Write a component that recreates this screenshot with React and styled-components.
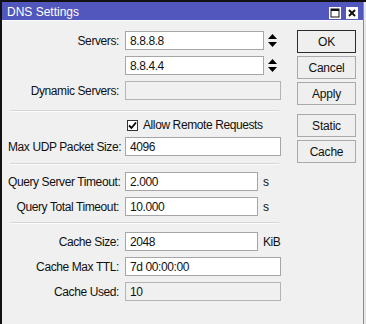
import React from 'react'
import styled, { createGlobalStyle } from 'styled-components'

const Global = createGlobalStyle`
  html, body { margin: 0; padding: 0; background: #e6e6e6; }
  * { box-sizing: border-box; }
`

const Frame = styled.div`
  width: 366px;
  height: 324px;
  display: flex;
  border-left: 2px solid #111;
  border-top: 2px solid #111;
  background: #e6e6e6;
  padding-right: 2px;
  font-family: "Liberation Sans", Arial, sans-serif;
  font-size: 12px;
  letter-spacing: -0.4px;
  color: #111;
`

const Window = styled.div`
  flex: 1;
  display: flex;
  flex-direction: column;
  background: #f0f0f0;
  border-right: 1px solid #8c8c8c;
`

const TitleBar = styled.div`
  height: 19px;
  display: flex;
  align-items: center;
  justify-content: space-between;
  padding: 0 5px 0 5px;
  background: #5157bd;
  color: #fff;
  letter-spacing: 0;
  border-bottom: 1px solid #fafafa;
`

const TitleText = styled.span`
  font-size: 12px;
  margin-top: 1px;
`

const TitleButtons = styled.div`
  display: flex;
  gap: 5px;
  margin-top: 3px;
`

const TitleButton = styled.div`
  width: 12px;
  height: 12px;
  background: #fff;
  display: flex;
  align-items: center;
  justify-content: center;
`

const Body = styled.div`
  display: flex;
  padding: 9px 0 0 6px;
`

const Form = styled.div`
  width: 273px;
  display: flex;
  flex-direction: column;
  margin-top: 1px;
`

const Row = styled.div`
  display: grid;
  grid-template-columns: 111px 156px;
  column-gap: 6px;
  align-items: center;
  height: ${p => p.$h || 19}px;
  margin-top: ${p => p.$top ?? 6}px;
`

const Label = styled.label`
  text-align: right;
  white-space: nowrap;
`

const Field = styled.div`
  display: flex;
  align-items: center;
`

const Input = styled.div`
  width: ${p => p.$w || 156}px;
  height: 19px;
  border: 1px solid ${p => (p.$disabled ? '#b4b4b4' : '#a6a6a6')};
  background: ${p => (p.$disabled ? '#f0f0f0' : '#fff')};
  padding: 0 4px;
  display: flex;
  align-items: center;
  white-space: nowrap;
  overflow: hidden;
`

const Spinner = styled.div`
  width: 17px;
  display: flex;
  justify-content: center;
`

const Unit = styled.span`
  margin-left: 5px;
`

const Separator = styled.div`
  height: 2px;
  margin: ${p => p.$top}px 2px 0 2px;
  border-top: 1px solid #d7d7d7;
  border-bottom: 1px solid #fbfbfb;
`

const Check = styled.div`
  display: flex;
  align-items: center;
  gap: 5px;
  padding-left: 2px;
`

const Box = styled.div`
  width: 11px;
  height: 11px;
  border: 1px solid #333;
  background: #fff;
  display: flex;
  align-items: center;
  justify-content: center;
`

const Buttons = styled.div`
  width: 59px;
  margin-left: 16px;
  display: flex;
  flex-direction: column;
  gap: 3px;
`

const Button = styled.div`
  height: 23px;
  display: flex;
  align-items: center;
  justify-content: center;
  background: #efefef;
  border: 1px solid ${p => (p.$primary ? '#2c2c2c' : '#a9a9a9')};
  margin-top: ${p => p.$top || 0}px;
  letter-spacing: -0.2px;
`

const UpDown = () => (
  <svg width="9" height="13" viewBox="0 0 9 13">
    <path d="M4.5 0 L9 5 L0 5 Z" fill="#000" />
    <path d="M0 8 L9 8 L4.5 13 Z" fill="#000" />
  </svg>
)

const FormRow = ({ label, top, children }) => (
  <Row $top={top}>
    <Label>{label}</Label>
    <Field>{children}</Field>
  </Row>
)

export default function App() {
  return (
    <>
      <Global />
      <Frame>
        <Window>
          <TitleBar>
            <TitleText>DNS Settings</TitleText>
            <TitleButtons>
              <TitleButton>
                <svg width="10" height="10" viewBox="0 0 10 10">
                  <rect x="1" y="1" width="8" height="8" fill="none" stroke="#111" strokeWidth="1" />
                  <rect x="1" y="1" width="8" height="2" fill="#111" />
                </svg>
              </TitleButton>
              <TitleButton>
                <svg width="10" height="10" viewBox="0 0 10 10">
                  <path d="M2 2 L8 8 M8 2 L2 8" stroke="#111" strokeWidth="2" />
                </svg>
              </TitleButton>
            </TitleButtons>
          </TitleBar>
          <Body>
            <Form>
              <FormRow label="Servers:" top={0}>
                <Input $w={139}>8.8.8.8</Input>
                <Spinner><UpDown /></Spinner>
              </FormRow>
              <FormRow label="">
                <Input $w={139}>8.8.4.4</Input>
                <Spinner><UpDown /></Spinner>
              </FormRow>
              <FormRow label="Dynamic Servers:">
                <Input $disabled />
              </FormRow>
              <Separator $top={10} />
              <Row $top={6} $h={14}>
                <span />
                <Check>
                  <Box>
                    <svg width="9" height="9" viewBox="0 0 9 9">
                      <path d="M1 4.5 L3.5 7 L8 1.5" fill="none" stroke="#000" strokeWidth="1.8" />
                    </svg>
                  </Box>
                  <span>Allow Remote Requests</span>
                </Check>
              </Row>
              <FormRow label="Max UDP Packet Size:" top={5}>
                <Input>4096</Input>
              </FormRow>
              <Separator $top={7} />
              <FormRow label="Query Server Timeout:" top={7}>
                <Input $w={133}>2.000</Input>
                <Unit>s</Unit>
              </FormRow>
              <FormRow label="Query Total Timeout:">
                <Input $w={133}>10.000</Input>
                <Unit>s</Unit>
              </FormRow>
              <Separator $top={6} />
              <FormRow label="Cache Size:" top={8}>
                <Input $w={133}>2048</Input>
                <Unit>KiB</Unit>
              </FormRow>
              <FormRow label="Cache Max TTL:">
                <Input>7d 00:00:00</Input>
              </FormRow>
              <FormRow label="Cache Used:">
                <Input $disabled>10</Input>
              </FormRow>
            </Form>
            <Buttons>
              <Button $primary>OK</Button>
              <Button>Cancel</Button>
              <Button>Apply</Button>
              <Button $top={6}>Static</Button>
              <Button>Cache</Button>
            </Buttons>
          </Body>
        </Window>
      </Frame>
    </>
  )
}
